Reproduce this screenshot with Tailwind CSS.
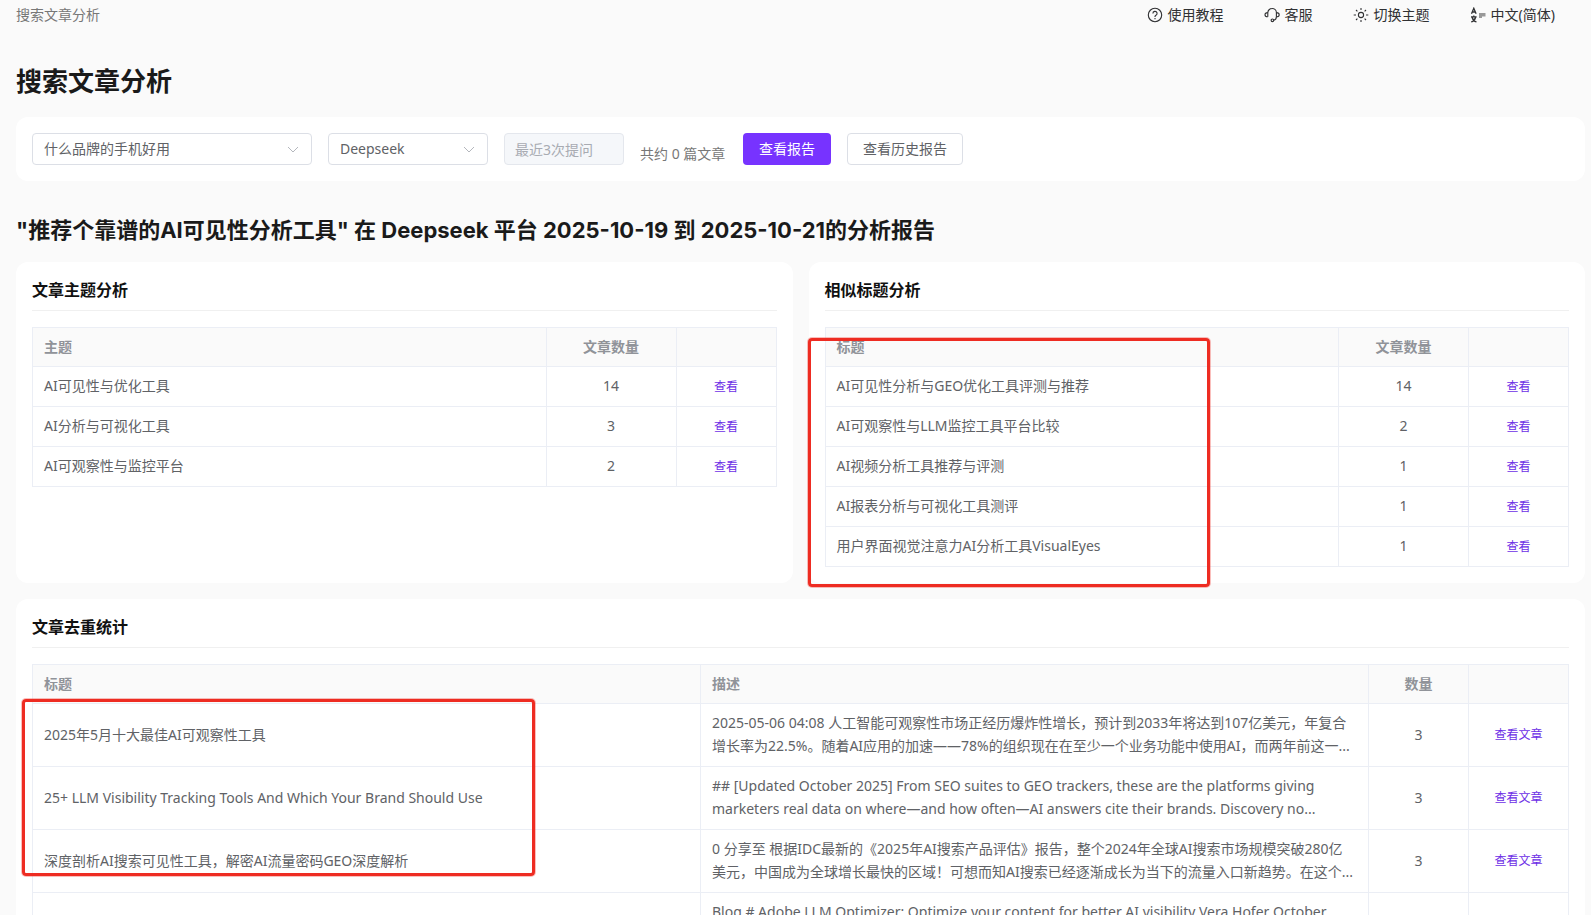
<!DOCTYPE html>
<html lang="zh-CN">
  <head>
    <meta charset="UTF-8" />
    <meta name="viewport" content="width=device-width, initial-scale=1.0" />
    <title>搜索文章分析</title>
    <script src="https://cdn.jsdelivr.net/npm/@tailwindcss/browser@4"></script>
  </head>
  <body class="bg-[#fafafa] text-[#606266] text-sm font-['Noto_Sans','Noto_Sans_CJK_SC',sans-serif]">
    <div class="h-screen overflow-hidden pl-4 pr-[6px]">
      <!-- Top bar -->
      <header class="flex items-center justify-between h-[29px] pr-[30px]">
        <span class="text-[#777]">搜索文章分析</span>
        <nav class="flex items-center gap-10 text-[#303133]">
          <a href="#" class="flex items-center gap-[5px]">
            <svg class="w-4 h-4" viewBox="0 0 16 16" fill="none" stroke="currentColor" stroke-width="1.1">
              <circle cx="8" cy="8" r="6.7" />
              <path d="M5.900 6.500a2.100 2.100 0 1 1 3.100 1.800c-.7.400-1 .7-1 1.300v.4M8 11v1.200" />
            </svg>
            使用教程
          </a>
          <a href="#" class="flex items-center gap-[5px]">
            <svg class="w-4 h-4" viewBox="0 0 16 16" fill="none" stroke="currentColor" stroke-width="1.100">
              <path d="M3.800 9.800V5.800a4.300 4.300 0 0 1 8.600 0v4c0 1.800-1.200 3.100-2.700 3.400" />
              <path d="M3.800 5.600C2 5.600 1 6.500 1 7.700s1 2.100 2.800 2.100M12.400 5.600c1.800 0 2.800.9 2.800 2.100s-1 2.100-2.800 2.100" />
              <circle cx="8.400" cy="13.300" r="1.300" />
            </svg>
            客服
          </a>
          <a href="#" class="flex items-center gap-[5px]">
            <svg class="w-4 h-4" viewBox="0 0 16 16" fill="none" stroke="currentColor" stroke-width="1.100">
              <circle cx="8" cy="8" r="2.600" />
              <path d="M8 1v2M8 13v2M.7 8h2.300M13 8h2.300M3 3l1.400 1.400M11.600 11.600L13 13M3 13l1.400-1.400M11.600 4.400L13 3" />
            </svg>
            切换主题
          </a>
          <a href="#" class="flex items-center gap-[5px]">
            <svg class="w-4 h-4" viewBox="0 0 16 16" fill="none" stroke="currentColor" stroke-width="1.300">
              <path d="M1.500 6.800l2.300-5.500 2.300 5.500M2.400 5h2.800M1 9.800h5.600M3.800 8.500v1.300M2 10c.6 2.500 2.300 4.300 4.500 5M5.700 10c-.6 2.500-2.300 4.300-4.500 5" />
              <path d="M9 6h6.500v3.500H12v1.500H9z" fill="#999" stroke="none" />
            </svg>
            中文(简体)
          </a>
        </nav>
      </header>

      <main>
        <h1 class="mt-8 mb-4 text-[26px] leading-10 font-bold text-[#1a1a1a]">搜索文章分析</h1>

        <!-- Filters -->
        <form class="flex items-center gap-4 p-4 bg-white rounded-xl">
          <div class="relative w-[280px]">
            <select aria-label="问题" class="appearance-none w-full h-8 px-[11px] border border-[#dcdfe6] rounded bg-white">
              <option>什么品牌的手机好用</option>
            </select>
            <svg class="absolute right-3 top-[9px] w-[14px] h-[14px] pointer-events-none" viewBox="0 0 14 14" fill="none" stroke="#b4b7bd">
              <path d="M2 5l5 5 5-5" />
            </svg>
          </div>
          <div class="relative w-40">
            <select aria-label="平台" class="appearance-none w-full h-8 px-[11px] border border-[#dcdfe6] rounded bg-white">
              <option>Deepseek</option>
            </select>
            <svg class="absolute right-3 top-[9px] w-[14px] h-[14px] pointer-events-none" viewBox="0 0 14 14" fill="none" stroke="#b4b7bd">
              <path d="M2 5l5 5 5-5" />
            </svg>
          </div>
          <input aria-label="范围" disabled value="最近3次提问" class="w-[120px] h-8 px-[10px] border border-[#e4e7ed] rounded bg-[#f5f7fa] text-[#a8abb2]" />
          <span class="self-end min-w-[87px] leading-[22px] text-[#777]">共约 0 篇文章</span>
          <button type="button" class="h-8 px-4 rounded bg-[#7733ff] text-white">查看报告</button>
          <button type="button" class="h-8 px-[15px] border border-[#dcdfe6] rounded bg-white">查看历史报告</button>
        </form>

        <h2 class="mt-[33px] mb-4 text-[22px] leading-8 font-bold text-[#1a1a1a] font-['Inter','Noto_Sans_CJK_SC',sans-serif]">"推荐个靠谱的AI可见性分析工具" 在 Deepseek 平台 2025-10-19 到 2025-10-21的分析报告</h2>

        <div class="grid grid-cols-2 gap-4 mb-4">
          <section class="p-4 bg-white rounded-xl">
            <h3 class="pb-2 mb-4 border-b border-[#f0f0f0] text-base font-bold text-[#111]">文章主题分析</h3>
            <table class="w-full table-fixed border-collapse border border-[#ebeef5] leading-[23px]">
              <thead class="bg-[#fafafa] text-[#909399]">
                <tr>
                  <th class="border border-[#ebeef5] px-[11px] pt-[7px] pb-2 text-left">主题</th>
                  <th class="border border-[#ebeef5] pt-[7px] pb-2 w-[130px]">文章数量</th>
                  <th class="border border-[#ebeef5] w-[100px]"></th>
                </tr>
              </thead>
              <tbody>
                <tr>
                  <td class="border border-[#ebeef5] px-[11px] pt-[7px] pb-[9px]">AI可见性与优化工具</td>
                  <td class="border border-[#ebeef5] pt-[7px] pb-[9px] text-center">14</td>
                  <td class="border border-[#ebeef5] text-center text-xs"><a href="#" class="text-[#6d2fe6]">查看</a></td>
                </tr>
                <tr>
                  <td class="border border-[#ebeef5] px-[11px] pt-[7px] pb-[9px]">AI分析与可视化工具</td>
                  <td class="border border-[#ebeef5] pt-[7px] pb-[9px] text-center">3</td>
                  <td class="border border-[#ebeef5] text-center text-xs"><a href="#" class="text-[#6d2fe6]">查看</a></td>
                </tr>
                <tr>
                  <td class="border border-[#ebeef5] px-[11px] pt-[7px] pb-[9px]">AI可观察性与监控平台</td>
                  <td class="border border-[#ebeef5] pt-[7px] pb-[9px] text-center">2</td>
                  <td class="border border-[#ebeef5] text-center text-xs"><a href="#" class="text-[#6d2fe6]">查看</a></td>
                </tr>
              </tbody>
            </table>
          </section>

          <section class="relative p-4 bg-white rounded-xl">
            <h3 class="pb-2 mb-4 border-b border-[#f0f0f0] text-base font-bold text-[#111]">相似标题分析</h3>
            <table class="w-full table-fixed border-collapse border border-[#ebeef5] leading-[23px]">
              <thead class="bg-[#fafafa] text-[#909399]">
                <tr>
                  <th class="border border-[#ebeef5] px-[11px] pt-[7px] pb-2 text-left">标题</th>
                  <th class="border border-[#ebeef5] pt-[7px] pb-2 w-[130px]">文章数量</th>
                  <th class="border border-[#ebeef5] w-[100px]"></th>
                </tr>
              </thead>
              <tbody>
                <tr>
                  <td class="border border-[#ebeef5] px-[11px] pt-[7px] pb-[9px]">AI可见性分析与GEO优化工具评测与推荐</td>
                  <td class="border border-[#ebeef5] pt-[7px] pb-[9px] text-center">14</td>
                  <td class="border border-[#ebeef5] text-center text-xs"><a href="#" class="text-[#6d2fe6]">查看</a></td>
                </tr>
                <tr>
                  <td class="border border-[#ebeef5] px-[11px] pt-[7px] pb-[9px]">AI可观察性与LLM监控工具平台比较</td>
                  <td class="border border-[#ebeef5] pt-[7px] pb-[9px] text-center">2</td>
                  <td class="border border-[#ebeef5] text-center text-xs"><a href="#" class="text-[#6d2fe6]">查看</a></td>
                </tr>
                <tr>
                  <td class="border border-[#ebeef5] px-[11px] pt-[7px] pb-[9px]">AI视频分析工具推荐与评测</td>
                  <td class="border border-[#ebeef5] pt-[7px] pb-[9px] text-center">1</td>
                  <td class="border border-[#ebeef5] text-center text-xs"><a href="#" class="text-[#6d2fe6]">查看</a></td>
                </tr>
                <tr>
                  <td class="border border-[#ebeef5] px-[11px] pt-[7px] pb-[9px]">AI报表分析与可视化工具测评</td>
                  <td class="border border-[#ebeef5] pt-[7px] pb-[9px] text-center">1</td>
                  <td class="border border-[#ebeef5] text-center text-xs"><a href="#" class="text-[#6d2fe6]">查看</a></td>
                </tr>
                <tr>
                  <td class="border border-[#ebeef5] px-[11px] pt-[7px] pb-[9px]">用户界面视觉注意力AI分析工具VisualEyes</td>
                  <td class="border border-[#ebeef5] pt-[7px] pb-[9px] text-center">1</td>
                  <td class="border border-[#ebeef5] text-center text-xs"><a href="#" class="text-[#6d2fe6]">查看</a></td>
                </tr>
              </tbody>
            </table>
            <!-- highlight -->
            <div class="absolute -left-px top-[76px] w-[402px] h-[249px] border-3 border-[#ee2c22] rounded ring-1 ring-[#ee2c22]/30 pointer-events-none"></div>
          </section>
        </div>

        <section class="relative p-4 bg-white rounded-xl">
          <h3 class="pb-2 mb-4 border-b border-[#f0f0f0] text-base font-bold text-[#111]">文章去重统计</h3>
          <table class="w-full table-fixed border-collapse border border-[#ebeef5] leading-[23px]">
            <thead class="bg-[#fafafa] text-[#909399]">
              <tr>
                <th class="border border-[#ebeef5] px-[11px] pt-[7px] pb-2 text-left">标题</th>
                <th class="border border-[#ebeef5] px-[11px] pt-[7px] pb-2 text-left">描述</th>
                <th class="border border-[#ebeef5] pt-[7px] pb-2 w-[100px]">数量</th>
                <th class="border border-[#ebeef5] w-[100px]"></th>
              </tr>
            </thead>
            <tbody>
              <tr>
                <td class="border border-[#ebeef5] px-[11px] pt-[7px] pb-[9px]">2025年5月十大最佳AI可观察性工具</td>
                <td class="border border-[#ebeef5] px-[11px] pt-[7px] pb-[9px] whitespace-nowrap">2025-05-06 04:08 人工智能可观察性市场正经历爆炸性增长，预计到2033年将达到107亿美元，年复合<br />增长率为22.5%。随着AI应用的加速——78%的组织现在在至少一个业务功能中使用AI，而两年前这一...</td>
                <td class="border border-[#ebeef5] pt-[7px] pb-[9px] text-center">3</td>
                <td class="border border-[#ebeef5] text-center text-xs"><a href="#" class="text-[#6d2fe6]">查看文章</a></td>
              </tr>
              <tr>
                <td class="border border-[#ebeef5] px-[11px] pt-[7px] pb-[9px]">25+ LLM Visibility Tracking Tools And Which Your Brand Should Use</td>
                <td class="border border-[#ebeef5] px-[11px] pt-[7px] pb-[9px] whitespace-nowrap">## [Updated October 2025] From SEO suites to GEO trackers, these are the platforms giving<br />marketers real data on where—and how often—AI answers cite their brands. Discovery no...</td>
                <td class="border border-[#ebeef5] pt-[7px] pb-[9px] text-center">3</td>
                <td class="border border-[#ebeef5] text-center text-xs"><a href="#" class="text-[#6d2fe6]">查看文章</a></td>
              </tr>
              <tr>
                <td class="border border-[#ebeef5] px-[11px] pt-[7px] pb-[9px]">深度剖析AI搜索可见性工具，解密AI流量密码GEO深度解析</td>
                <td class="border border-[#ebeef5] px-[11px] pt-[7px] pb-[9px] whitespace-nowrap">0 分享至 根据IDC最新的《2025年AI搜索产品评估》报告，整个2024年全球AI搜索市场规模突破280亿<br />美元，中国成为全球增长最快的区域！可想而知AI搜索已经逐渐成长为当下的流量入口新趋势。在这个...</td>
                <td class="border border-[#ebeef5] pt-[7px] pb-[9px] text-center">3</td>
                <td class="border border-[#ebeef5] text-center text-xs"><a href="#" class="text-[#6d2fe6]">查看文章</a></td>
              </tr>
              <tr>
                <td class="border border-[#ebeef5] px-[11px] pt-[7px] pb-[9px]"></td>
                <td class="border border-[#ebeef5] px-[11px] pt-[7px] pb-[9px] whitespace-nowrap">Blog # Adobe LLM Optimizer: Optimize your content for better AI visibility Vera Hofer October</td>
                <td class="border border-[#ebeef5]"></td>
                <td class="border border-[#ebeef5]"></td>
              </tr>
            </tbody>
          </table>
          <!-- highlight -->
          <div class="absolute left-[6px] top-[100px] w-[513px] h-[177px] border-3 border-[#ee2c22] rounded ring-1 ring-[#ee2c22]/30 pointer-events-none"></div>
        </section>
      </main>
    </div>
  </body>
</html>
